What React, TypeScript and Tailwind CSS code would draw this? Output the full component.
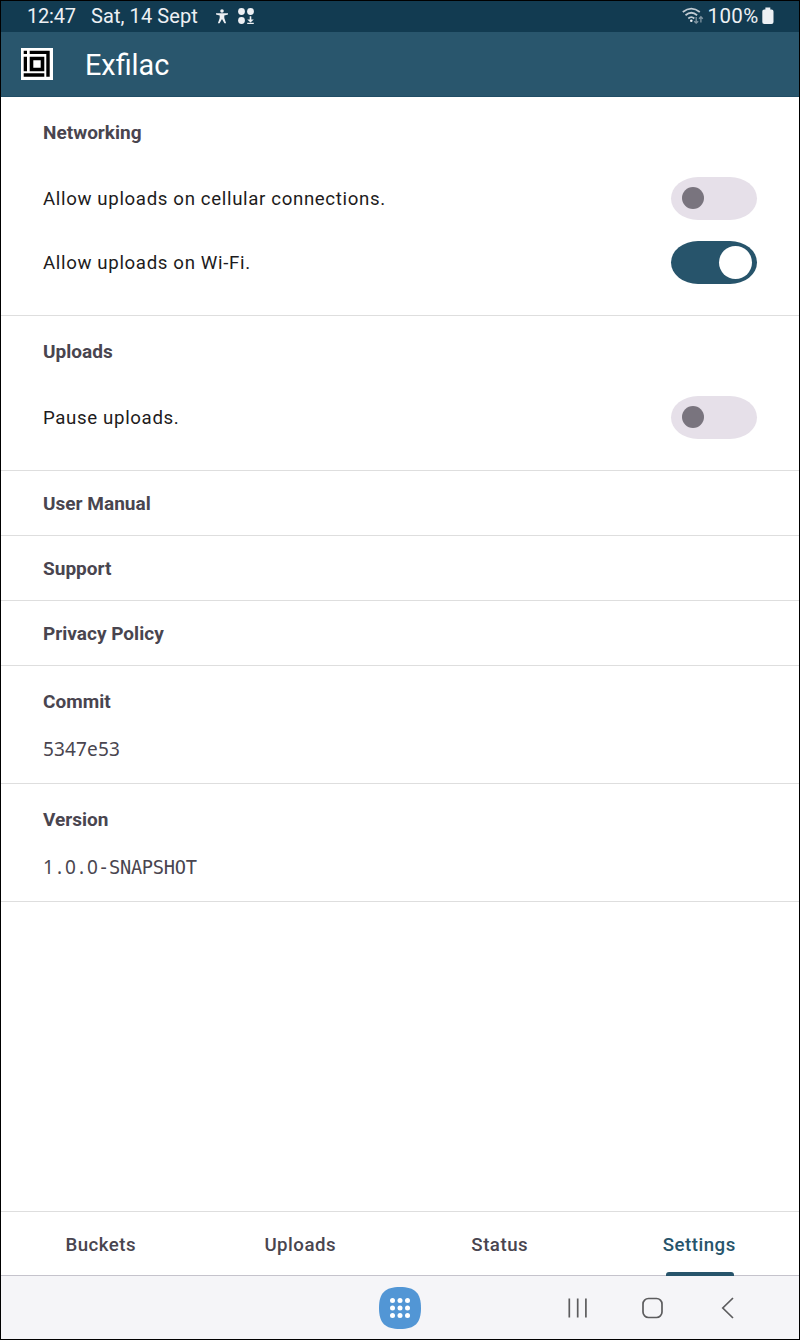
import React from "react";

function Toggle({ on = false }: { on?: boolean }) {
  return (
    <span
      role="switch"
      aria-checked={on}
      className={
        "mb-px flex h-[43px] w-[86px] shrink-0 items-center rounded-[27px/21.5px] " +
        (on ? "justify-end bg-[#27546b] pr-[5px]" : "justify-start bg-[#e6e0e9] pb-px pl-[10.5px]")
      }
    >
      <span className={on ? "size-[33px] rounded-full bg-white" : "size-[22px] rounded-full bg-[#79747e]"} />
    </span>
  );
}

function Heading({ children }: { children: React.ReactNode }) {
  return <h2 className="text-[19px] leading-6 font-bold tracking-[0.02px] text-[#49454f]">{children}</h2>;
}

function Setting({ label, on }: { label: string; on?: boolean }) {
  return (
    <div className="flex h-16 items-center justify-between">
      <span className="text-[18.67px] tracking-[0.64px] text-[#1d1b20]">{label}</span>
      <Toggle on={on} />
    </div>
  );
}

const line = "border-b border-[#dedede] px-[42px]";

function LinkRow({ label }: { label: string }) {
  return (
    <div className={line + " flex h-[65px] items-center pt-px"}>
      <Heading>{label}</Heading>
    </div>
  );
}

function Tab({ label, active = false }: { label: string; active?: boolean }) {
  return (
    <div className={"relative flex flex-1 items-center justify-center pt-[2px] text-[18.67px] font-medium tracking-[0.5px] " + (active ? "text-[#27546b]" : "text-[#49454f]")}>
      {label}
      {active && <span className="absolute right-[65px] -bottom-px h-1 w-[68px] rounded-t-[3px] bg-[#27546b]" />}
    </div>
  );
}

function Logo() {
  return (
    <svg width="32" height="32" viewBox="0 0 32 32">
      <rect width="32" height="32" fill="#fff" />
      <g fill="#000">
        <path d="M2.7 2.7H6V6H2.7zM8.7 2.7h20v26h-3.400V6H8.700zM2.700 8.700H6v14.600H2.700zM2.700 25.300h20.600v3.400H2.700z" />
        <path fillRule="evenodd" d="M8.700 8.700h14.600v14.600H8.700zm3.600 3.600v7.400h7.400v-7.400z" />
      </g>
    </svg>
  );
}

export default function App() {
  return (
    <div className="flex h-[1340px] w-[800px] flex-col overflow-hidden border border-black bg-white font-['Roboto',sans-serif]">
      <div className="flex h-[31px] shrink-0 items-center bg-[#123b51] pr-[25px] pb-px pl-[26px] text-[20px] leading-[30px] text-[#edf0f4]">
        <span className="w-[64px] tracking-[-0.2px]">12:47</span>
        <span className="w-[124px] tracking-[0.08px]">Sat, 14 Sept</span>
        <svg width="14" height="18" viewBox="0 0 14 18" fill="currentColor">
          <circle cx="7" cy="4" r="1.8" />
          <path d="M1 6.300h12v1.300l-3.700 1v2.500l1.800 5.200H9.400L7 12l-2.400 4.300H2.900l1.800-5.200V8.600L1 7.600z" />
        </svg>
        <svg className="ml-[8px]" width="18" height="18" viewBox="0 0 18 18" fill="currentColor">
          <circle cx="4.5" cy="4.5" r="3.4" />
          <circle cx="13.5" cy="4.5" r="3.4" />
          <circle cx="4.5" cy="13.5" r="3.4" />
          <path d="M12.700 9.200h1.600v3.400h2.500l-3.300 3-3.300-3h2.500zM10.200 15.700h6.600v1.300h-6.600z" />
        </svg>
        <span className="flex-1" />
        <svg className="mr-[4px]" width="22" height="18" viewBox="0 0 22 18" fill="none" stroke="currentColor" strokeWidth="1.8">
          <path opacity=".8" d="M.8 5q8.500-6.700 17 0M3.500 8.200q5.800-4.800 11.600 0M6.300 11.500q3-2.700 6 0" />
          <circle cx="9.3" cy="13.8" r="1.3" fill="currentColor" stroke="none" />
          <path strokeWidth="1.3" opacity=".5" d="M14.200 10v6.200m-2-2 2 2 2-2M18.900 15.500V9.800m-1.900 2 1.900-2 1.900 2" />
        </svg>
        <span className="w-[54.5px] text-[20.5px] tracking-[0.4px]">100%</span>
        <svg className="mb-px" width="12" height="18" viewBox="0 0 12 18" fill="currentColor">
          <path d="M3.400 0.500h4.900v2h1.200q2 0 2 2v10.500q0 2-2 2h-7.200q-2 0-2-2V4.500q0-2 2-2h1.100z" />
        </svg>
      </div>

      <header className="flex h-[65px] shrink-0 items-center border-b border-[#204d65] bg-[#29566d] pl-[20px]">
        <Logo />
        <h1 className="mt-[2px] ml-[32px] text-[28.8px] leading-9 font-normal text-white">Exfilac</h1>
      </header>

      <main className="flex-1">
        <section className={line + " h-[219px] pt-6"}>
          <Heading>Networking</Heading>
          <div className="mt-[22px]">
            <Setting label="Allow uploads on cellular connections." />
            <Setting label="Allow uploads on Wi-Fi." on />
          </div>
        </section>
        <section className={line + " h-[155px] pt-6"}>
          <Heading>Uploads</Heading>
          <div className="mt-[22px]">
            <Setting label="Pause uploads." />
          </div>
        </section>
        <LinkRow label="User Manual" />
        <LinkRow label="Support" />
        <LinkRow label="Privacy Policy" />
        <section className={line + " h-[118px] pt-6"}>
          <Heading>Commit</Heading>
          <p className="mt-[22px] font-['Noto_Sans',sans-serif] text-[19px] leading-[26px] tracking-[0.15px] text-[#49454f]">5347e53</p>
        </section>
        <section className={line + " h-[118px] pt-6"}>
          <Heading>Version</Heading>
          <p className="mt-[22px] font-['Noto_Sans',sans-serif] text-[19px] leading-[26px] tracking-[0.13px] text-[#49454f]">
            1<span className="px-[2.9px]">.</span>0<span className="px-[2.9px]">.</span>0
            <span className="font-['DejaVu_Sans_Mono',monospace] text-[18.7px] tracking-[-0.3px]">-SNAPSHOT</span>
          </p>
        </section>
      </main>

      <nav className="flex h-[65px] shrink-0 border-t border-b border-t-[#dedede] border-b-[#c5c3cc]">
        <Tab label="Buckets" />
        <Tab label="Uploads" />
        <Tab label="Status" />
        <Tab label="Settings" active />
      </nav>

      <div className="flex h-[63px] shrink-0 items-center bg-[#f5f5f8] pl-[378px]">
        <svg width="42" height="42" viewBox="0 0 42 42">
          <path d="M21 0C36 0 42 6 42 21S36 42 21 42 0 36 0 21 6 0 21 0" fill="#5296d5" />
          <g fill="#fff">
            {[13.5, 21, 28.5].map((y) =>
              [13.5, 21, 28.5].map((x) => <circle key={x + "-" + y} cx={x} cy={y} r="2.5" />)
            )}
          </g>
        </svg>
        <svg className="mt-px ml-[147px]" width="20" height="22" viewBox="0 0 20 22" stroke="#5c5c5e" strokeWidth="1.7">
          <path d="M1.300 1.500v19M9.700 1.500v19M17.900 1.500v19" />
        </svg>
        <svg className="mt-px ml-[53px]" width="22" height="22" viewBox="0 0 22 22" fill="none" stroke="#5c5c5e" strokeWidth="1.7">
          <rect x="2" y="1.5" width="19" height="19" rx="5.5" />
        </svg>
        <svg className="mt-px ml-[58px]" width="14" height="22" viewBox="0 0 14 22" fill="none" stroke="#5c5c5e" strokeWidth="1.7">
          <path d="M12 1 1.800 11 12 21" />
        </svg>
      </div>
    </div>
  );
}
